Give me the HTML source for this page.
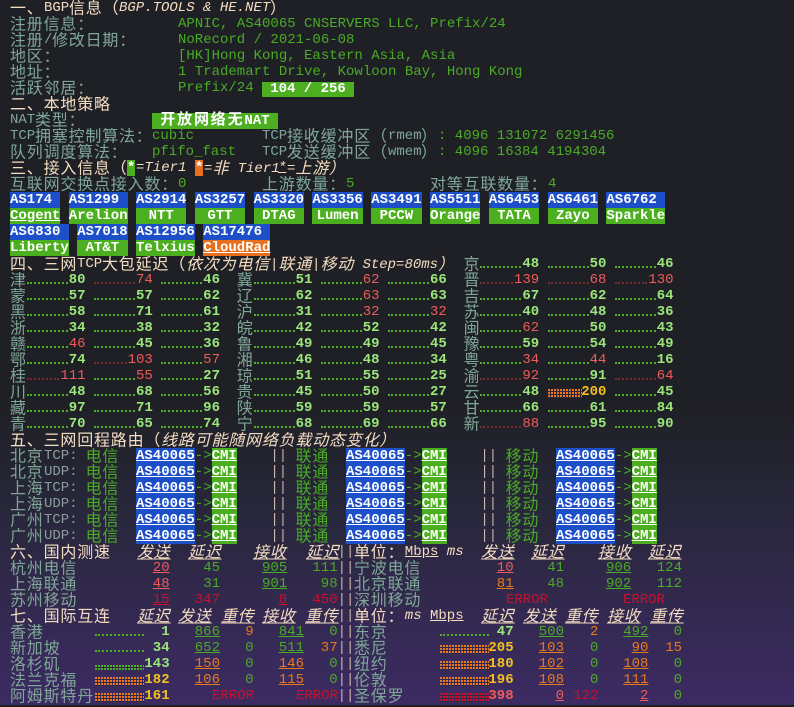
<!DOCTYPE html>
<html><head><meta charset="utf-8"><style>
body{margin:0;width:794px;height:705px;overflow:hidden;position:relative;background:linear-gradient(180deg,#1f2025 0,#1f2025 57%,#27273a 72%,#33294f 86%,#3c2b63 100%);font:14px/16px "Liberation Mono","Noto Sans CJK SC",monospace;color:#7fa797}
t{position:absolute;white-space:pre;display:block;height:16px}
.c{letter-spacing:0.8px;font-size:16px;transform:translateY(1.5px)}
span.c{display:inline-block}
.bx .c{font-size:15px;letter-spacing:1.8px;transform:none}
.h{color:#f3dcc0}.g{color:#7fa797}.v{color:#4aab25}.b{color:#9be77a;font-weight:bold}.r{color:#f05a5a}.dr{color:#c8102e}.o{color:#e8791e}.y{color:#f0c020;font-weight:bold}.gy{color:#8d9c9c}.p{color:#c9b3ab}
.it{font-style:italic}.u{text-decoration:underline}
.bx{color:#fff;font-weight:bold;text-align:center}
.bl{background:#1d4fc9}.gn{background:#4caf1f}.or{background:#e8701c}
.f{display:flex;width:58.8px;font-weight:bold}
.f i{flex:1;height:0;border-bottom:2px dotted #4caf20;margin:10px 1px 0 0}
.f.x i{border-bottom-color:#7a2a2a}
.f .n{color:#9be77a}.f .rr{color:#f05a5a;font-weight:normal}.f .yy{color:#f0c020}
.R{text-align:right}
.d{position:absolute;height:0;border-bottom:2px dotted #4caf20}
.gr{position:absolute;background:repeating-linear-gradient(90deg,var(--c) 0 2px,transparent 2px 3px)}
.gr::after{content:"";position:absolute;inset:0;background:repeating-linear-gradient(180deg,transparent 0 2px,#2f2944 2px 3px)}
</style></head><body>
<t class="h c" style="left:10px;top:0">一、</t><t class="h" style="left:44px;top:0">BGP</t><t class="h c" style="left:69px;top:0">信息（</t><t class="h it" style="left:119px;top:0">BGP.TOOLS &amp; HE.NET</t><t class="h c" style="left:270px;top:0">）</t>
<t class="g c" style="left:10px;top:16px">注册信息：</t><t class="v" style="left:178px;top:16px">APNIC, AS40065 CNSERVERS LLC, Prefix/24</t>
<t class="g c" style="left:10px;top:32px">注册</t><t class="g" style="left:44px;top:32px">/</t><t class="g c" style="left:52px;top:32px">修改日期：</t><t class="v" style="left:178px;top:32px">NoRecord / 2021-06-08</t>
<t class="g c" style="left:10px;top:48px">地区：</t><t class="v" style="left:178px;top:48px">[HK]Hong Kong, Eastern Asia, Asia</t>
<t class="g c" style="left:10px;top:64px">地址：</t><t class="v" style="left:178px;top:64px">1 Trademart Drive, Kowloon Bay, Hong Kong</t>
<t class="g c" style="left:10px;top:80px">活跃邻居：</t><t class="v" style="left:178px;top:80px">Prefix/24</t><t class="bx gn" style="left:262px;top:82px;width:92px;height:15px;line-height:15px">104 / 256</t>
<t class="h c" style="left:10px;top:96px">二、本地策略</t>
<t class="g" style="left:10px;top:112px">NAT</t><t class="g c" style="left:35px;top:112px">类型：</t><t class="bx gn" style="left:152px;top:113px;width:126px;height:16px"><span class="c">开放网络无</span>NAT</t>
<t class="g" style="left:10px;top:128px">TCP</t><t class="g c" style="left:35px;top:128px">拥塞控制算法：</t><t class="v" style="left:152px;top:128px">cubic</t><t class="g" style="left:262px;top:128px">TCP</t><t class="g c" style="left:287px;top:128px">接收缓冲区（</t><t class="g" style="left:388px;top:128px">rmem</t><t class="g c" style="left:421px;top:128px">）</t><t class="v" style="left:438px;top:128px">: 4096 131072 6291456</t>
<t class="g c" style="left:10px;top:144px">队列调度算法：</t><t class="v" style="left:152px;top:144px">pfifo_fast</t><t class="g" style="left:262px;top:144px">TCP</t><t class="g c" style="left:287px;top:144px">发送缓冲区（</t><t class="g" style="left:388px;top:144px">wmem</t><t class="g c" style="left:421px;top:144px">）</t><t class="v" style="left:438px;top:144px">: 4096 16384 4194304</t>
<t class="h c" style="left:10px;top:160px">三、接入信息（</t><t class="bx gn" style="left:127px;top:160px;width:8.4px">*</t><t class="h it" style="left:136px;top:160px">=Tier1</t><t class="bx or" style="left:195px;top:160px;width:8.4px">*</t><t class="h it" style="left:204px;top:160px">=<span class="c">非</span> Tier1</t><t class="h it u" style="left:278px;top:160px">*</t><t class="h it" style="left:287px;top:160px">=<span class="c">上游</span><span class="c">）</span></t>
<t class="g c" style="left:10px;top:176px">互联网交换点接入数：</t><t class="v" style="left:178px;top:176px">0</t><t class="g c" style="left:262px;top:176px">上游数量：</t><t class="v" style="left:346px;top:176px">5</t><t class="g c" style="left:430px;top:176px">对等互联数量：</t><t class="v" style="left:548px;top:176px">4</t>
<t class="bx bl" style="left:10px;top:192px;width:50.4px;text-align:left">AS174</t><t class="bx gn u" style="left:10px;top:208px;width:50.4px">Cogent</t>
<t class="bx bl" style="left:68.8px;top:192px;width:58.8px;text-align:left">AS1299</t><t class="bx gn" style="left:68.8px;top:208px;width:58.8px">Arelion</t>
<t class="bx bl" style="left:136px;top:192px;width:50.4px">AS2914</t><t class="bx gn" style="left:136px;top:208px;width:50.4px">NTT</t>
<t class="bx bl" style="left:194.8px;top:192px;width:50.4px">AS3257</t><t class="bx gn" style="left:194.8px;top:208px;width:50.4px">GTT</t>
<t class="bx bl" style="left:253.6px;top:192px;width:50.4px">AS3320</t><t class="bx gn" style="left:253.6px;top:208px;width:50.4px">DTAG</t>
<t class="bx bl" style="left:312.4px;top:192px;width:50.4px">AS3356</t><t class="bx gn" style="left:312.4px;top:208px;width:50.4px">Lumen</t>
<t class="bx bl" style="left:371.2px;top:192px;width:50.4px">AS3491</t><t class="bx gn" style="left:371.2px;top:208px;width:50.4px">PCCW</t>
<t class="bx bl" style="left:430px;top:192px;width:50.4px">AS5511</t><t class="bx gn" style="left:430px;top:208px;width:50.4px">Orange</t>
<t class="bx bl" style="left:488.8px;top:192px;width:50.4px">AS6453</t><t class="bx gn" style="left:488.8px;top:208px;width:50.4px">TATA</t>
<t class="bx bl" style="left:547.6px;top:192px;width:50.4px">AS6461</t><t class="bx gn" style="left:547.6px;top:208px;width:50.4px">Zayo</t>
<t class="bx bl" style="left:606.4px;top:192px;width:58.8px;text-align:left">AS6762</t><t class="bx gn" style="left:606.4px;top:208px;width:58.8px">Sparkle</t>
<t class="bx bl" style="left:10px;top:224px;width:58.8px;text-align:left">AS6830</t><t class="bx gn" style="left:10px;top:240px;width:58.8px">Liberty</t>
<t class="bx bl" style="left:77.2px;top:224px;width:50.4px">AS7018</t><t class="bx gn" style="left:77.2px;top:240px;width:50.4px">AT&amp;T</t>
<t class="bx bl" style="left:136px;top:224px;width:58.8px">AS12956</t><t class="bx gn" style="left:136px;top:240px;width:58.8px">Telxius</t>
<t class="bx bl" style="left:203.2px;top:224px;width:67.2px;text-align:left">AS17476</t><t class="bx or u" style="left:203.2px;top:240px;width:67.2px;text-align:left">CloudRad</t>
<t class="h c" style="left:10px;top:256px">四、三网</t><t class="h" style="left:77px;top:256px">TCP</t><t class="h c" style="left:102px;top:256px">大包延迟（</t><t class="h it" style="left:186px;top:256px"><span class="c">依次为电信</span>|<span class="c">联通</span>|<span class="c">移动</span> Step=80ms<span class="c">）</span></t>
<t class="g c" style="left:463.6px;top:256px">京</t><t class="f" style="left:480.4px;top:256px"><i></i><b class="n">48</b></t><t class="f" style="left:547.6px;top:256px"><i></i><b class="n">50</b></t><t class="f" style="left:614.8px;top:256px"><i></i><b class="n">46</b></t>

<t class="g c" style="left:10px;top:272px">津</t><t class="f" style="left:26.8px;top:272px"><i></i><b class="n">80</b></t><t class="f x" style="left:94px;top:272px"><i></i><b class="rr">74</b></t><t class="f" style="left:161.2px;top:272px"><i></i><b class="n">46</b></t>
<t class="g c" style="left:236.8px;top:272px">冀</t><t class="f" style="left:253.6px;top:272px"><i></i><b class="n">51</b></t><t class="f" style="left:320.8px;top:272px"><i></i><b class="rr">62</b></t><t class="f" style="left:388px;top:272px"><i></i><b class="n">66</b></t>
<t class="g c" style="left:463.6px;top:272px">晋</t><t class="f x" style="left:480.4px;top:272px"><i></i><b class="rr">139</b></t><t class="f x" style="left:547.6px;top:272px"><i></i><b class="rr">68</b></t><t class="f x" style="left:614.8px;top:272px"><i></i><b class="rr">130</b></t>

<t class="g c" style="left:10px;top:288px">蒙</t><t class="f" style="left:26.8px;top:288px"><i></i><b class="n">57</b></t><t class="f" style="left:94px;top:288px"><i></i><b class="n">57</b></t><t class="f" style="left:161.2px;top:288px"><i></i><b class="n">62</b></t>
<t class="g c" style="left:236.8px;top:288px">辽</t><t class="f" style="left:253.6px;top:288px"><i></i><b class="n">62</b></t><t class="f" style="left:320.8px;top:288px"><i></i><b class="rr">63</b></t><t class="f" style="left:388px;top:288px"><i></i><b class="n">63</b></t>
<t class="g c" style="left:463.6px;top:288px">吉</t><t class="f" style="left:480.4px;top:288px"><i></i><b class="n">67</b></t><t class="f" style="left:547.6px;top:288px"><i></i><b class="n">62</b></t><t class="f" style="left:614.8px;top:288px"><i></i><b class="n">64</b></t>

<t class="g c" style="left:10px;top:304px">黑</t><t class="f" style="left:26.8px;top:304px"><i></i><b class="n">58</b></t><t class="f" style="left:94px;top:304px"><i></i><b class="n">71</b></t><t class="f" style="left:161.2px;top:304px"><i></i><b class="n">61</b></t>
<t class="g c" style="left:236.8px;top:304px">沪</t><t class="f" style="left:253.6px;top:304px"><i></i><b class="n">31</b></t><t class="f" style="left:320.8px;top:304px"><i></i><b class="rr">32</b></t><t class="f" style="left:388px;top:304px"><i></i><b class="rr">32</b></t>
<t class="g c" style="left:463.6px;top:304px">苏</t><t class="f" style="left:480.4px;top:304px"><i></i><b class="n">40</b></t><t class="f" style="left:547.6px;top:304px"><i></i><b class="n">48</b></t><t class="f" style="left:614.8px;top:304px"><i></i><b class="n">36</b></t>

<t class="g c" style="left:10px;top:320px">浙</t><t class="f" style="left:26.8px;top:320px"><i></i><b class="n">34</b></t><t class="f" style="left:94px;top:320px"><i></i><b class="n">38</b></t><t class="f" style="left:161.2px;top:320px"><i></i><b class="n">32</b></t>
<t class="g c" style="left:236.8px;top:320px">皖</t><t class="f" style="left:253.6px;top:320px"><i></i><b class="n">42</b></t><t class="f" style="left:320.8px;top:320px"><i></i><b class="n">52</b></t><t class="f" style="left:388px;top:320px"><i></i><b class="n">42</b></t>
<t class="g c" style="left:463.6px;top:320px">闽</t><t class="f" style="left:480.4px;top:320px"><i></i><b class="rr">62</b></t><t class="f" style="left:547.6px;top:320px"><i></i><b class="n">50</b></t><t class="f" style="left:614.8px;top:320px"><i></i><b class="n">43</b></t>

<t class="g c" style="left:10px;top:336px">赣</t><t class="f" style="left:26.8px;top:336px"><i></i><b class="rr">46</b></t><t class="f" style="left:94px;top:336px"><i></i><b class="n">45</b></t><t class="f" style="left:161.2px;top:336px"><i></i><b class="n">36</b></t>
<t class="g c" style="left:236.8px;top:336px">鲁</t><t class="f" style="left:253.6px;top:336px"><i></i><b class="n">49</b></t><t class="f" style="left:320.8px;top:336px"><i></i><b class="n">49</b></t><t class="f" style="left:388px;top:336px"><i></i><b class="n">45</b></t>
<t class="g c" style="left:463.6px;top:336px">豫</t><t class="f" style="left:480.4px;top:336px"><i></i><b class="n">59</b></t><t class="f" style="left:547.6px;top:336px"><i></i><b class="n">54</b></t><t class="f" style="left:614.8px;top:336px"><i></i><b class="n">49</b></t>

<t class="g c" style="left:10px;top:352px">鄂</t><t class="f" style="left:26.8px;top:352px"><i></i><b class="n">74</b></t><t class="f x" style="left:94px;top:352px"><i></i><b class="rr">103</b></t><t class="f" style="left:161.2px;top:352px"><i></i><b class="rr">57</b></t>
<t class="g c" style="left:236.8px;top:352px">湘</t><t class="f" style="left:253.6px;top:352px"><i></i><b class="n">46</b></t><t class="f" style="left:320.8px;top:352px"><i></i><b class="n">48</b></t><t class="f" style="left:388px;top:352px"><i></i><b class="n">34</b></t>
<t class="g c" style="left:463.6px;top:352px">粤</t><t class="f" style="left:480.4px;top:352px"><i></i><b class="rr">34</b></t><t class="f" style="left:547.6px;top:352px"><i></i><b class="rr">44</b></t><t class="f" style="left:614.8px;top:352px"><i></i><b class="n">16</b></t>

<t class="g c" style="left:10px;top:368px">桂</t><t class="f x" style="left:26.8px;top:368px"><i></i><b class="rr">111</b></t><t class="f" style="left:94px;top:368px"><i></i><b class="rr">55</b></t><t class="f" style="left:161.2px;top:368px"><i></i><b class="n">27</b></t>
<t class="g c" style="left:236.8px;top:368px">琼</t><t class="f" style="left:253.6px;top:368px"><i></i><b class="n">51</b></t><t class="f" style="left:320.8px;top:368px"><i></i><b class="n">55</b></t><t class="f" style="left:388px;top:368px"><i></i><b class="n">25</b></t>
<t class="g c" style="left:463.6px;top:368px">渝</t><t class="f x" style="left:480.4px;top:368px"><i></i><b class="rr">92</b></t><t class="f" style="left:547.6px;top:368px"><i></i><b class="n">91</b></t><t class="f x" style="left:614.8px;top:368px"><i></i><b class="rr">64</b></t>

<t class="g c" style="left:10px;top:384px">川</t><t class="f" style="left:26.8px;top:384px"><i></i><b class="n">48</b></t><t class="f" style="left:94px;top:384px"><i></i><b class="n">68</b></t><t class="f" style="left:161.2px;top:384px"><i></i><b class="n">56</b></t>
<t class="g c" style="left:236.8px;top:384px">贵</t><t class="f" style="left:253.6px;top:384px"><i></i><b class="n">45</b></t><t class="f" style="left:320.8px;top:384px"><i></i><b class="n">50</b></t><t class="f" style="left:388px;top:384px"><i></i><b class="n">27</b></t>
<t class="g c" style="left:463.6px;top:384px">云</t><t class="f" style="left:480.4px;top:384px"><i></i><b class="n">48</b></t><div class="gr" style="left:547.6px;top:389px;width:34px;height:9px;--c:#e8791e"></div><t class="y R" style="right:187.6px;top:384px">200</t><t class="f" style="left:614.8px;top:384px"><i></i><b class="n">45</b></t>

<t class="g c" style="left:10px;top:400px">藏</t><t class="f" style="left:26.8px;top:400px"><i></i><b class="n">97</b></t><t class="f" style="left:94px;top:400px"><i></i><b class="n">71</b></t><t class="f" style="left:161.2px;top:400px"><i></i><b class="n">96</b></t>
<t class="g c" style="left:236.8px;top:400px">陕</t><t class="f" style="left:253.6px;top:400px"><i></i><b class="n">59</b></t><t class="f" style="left:320.8px;top:400px"><i></i><b class="n">59</b></t><t class="f" style="left:388px;top:400px"><i></i><b class="n">57</b></t>
<t class="g c" style="left:463.6px;top:400px">甘</t><t class="f" style="left:480.4px;top:400px"><i></i><b class="n">66</b></t><t class="f" style="left:547.6px;top:400px"><i></i><b class="n">61</b></t><t class="f" style="left:614.8px;top:400px"><i></i><b class="n">84</b></t>

<t class="g c" style="left:10px;top:416px">青</t><t class="f" style="left:26.8px;top:416px"><i></i><b class="n">70</b></t><t class="f" style="left:94px;top:416px"><i></i><b class="n">65</b></t><t class="f" style="left:161.2px;top:416px"><i></i><b class="n">74</b></t>
<t class="g c" style="left:236.8px;top:416px">宁</t><t class="f" style="left:253.6px;top:416px"><i></i><b class="n">68</b></t><t class="f" style="left:320.8px;top:416px"><i></i><b class="n">69</b></t><t class="f" style="left:388px;top:416px"><i></i><b class="n">66</b></t>
<t class="g c" style="left:463.6px;top:416px">新</t><t class="f x" style="left:480.4px;top:416px"><i></i><b class="rr">88</b></t><t class="f" style="left:547.6px;top:416px"><i></i><b class="n">95</b></t><t class="f" style="left:614.8px;top:416px"><i></i><b class="n">90</b></t>

<t class="h c" style="left:10px;top:432px">五、三网回程路由（</t><t class="h it c" style="left:161px;top:432px">线路可能随网络负载动态变化）</t>

<t class="g c" style="left:10px;top:448px">北京</t><t class="gy" style="left:44px;top:448px">TCP:</t><t class="v c" style="left:85.6px;top:448px">电信</t>
<t class="g c" style="left:10px;top:464px">北京</t><t class="gy" style="left:44px;top:464px">UDP:</t><t class="v c" style="left:85.6px;top:464px">电信</t>
<t class="g c" style="left:10px;top:480px">上海</t><t class="gy" style="left:44px;top:480px">TCP:</t><t class="v c" style="left:85.6px;top:480px">电信</t>
<t class="g c" style="left:10px;top:496px">上海</t><t class="gy" style="left:44px;top:496px">UDP:</t><t class="v c" style="left:85.6px;top:496px">电信</t>
<t class="g c" style="left:10px;top:512px">广州</t><t class="gy" style="left:44px;top:512px">TCP:</t><t class="v c" style="left:85.6px;top:512px">电信</t>
<t class="g c" style="left:10px;top:528px">广州</t><t class="gy" style="left:44px;top:528px">UDP:</t><t class="v c" style="left:85.6px;top:528px">电信</t>

<t class="bx bl u" style="left:136px;top:448px;width:58.8px">AS40065</t><t class="v" style="left:194.8px;top:448px">-&gt;</t><t class="bx gn u" style="left:211.6px;top:448px;width:25.2px">CMI</t><t class="p" style="left:270.4px;top:448px">||</t><t class="v c" style="left:295.6px;top:448px">联通</t><t class="bx bl u" style="left:346px;top:448px;width:58.8px">AS40065</t><t class="v" style="left:404.8px;top:448px">-&gt;</t><t class="bx gn u" style="left:421.6px;top:448px;width:25.2px">CMI</t><t class="p" style="left:480.4px;top:448px">||</t><t class="v c" style="left:505.6px;top:448px">移动</t><t class="bx bl u" style="left:556px;top:448px;width:58.8px">AS40065</t><t class="v" style="left:614.8px;top:448px">-&gt;</t><t class="bx gn u" style="left:631.6px;top:448px;width:25.2px">CMI</t>
<t class="bx bl u" style="left:136px;top:464px;width:58.8px">AS40065</t><t class="v" style="left:194.8px;top:464px">-&gt;</t><t class="bx gn u" style="left:211.6px;top:464px;width:25.2px">CMI</t><t class="p" style="left:270.4px;top:464px">||</t><t class="v c" style="left:295.6px;top:464px">联通</t><t class="bx bl u" style="left:346px;top:464px;width:58.8px">AS40065</t><t class="v" style="left:404.8px;top:464px">-&gt;</t><t class="bx gn u" style="left:421.6px;top:464px;width:25.2px">CMI</t><t class="p" style="left:480.4px;top:464px">||</t><t class="v c" style="left:505.6px;top:464px">移动</t><t class="bx bl u" style="left:556px;top:464px;width:58.8px">AS40065</t><t class="v" style="left:614.8px;top:464px">-&gt;</t><t class="bx gn u" style="left:631.6px;top:464px;width:25.2px">CMI</t>
<t class="bx bl u" style="left:136px;top:480px;width:58.8px">AS40065</t><t class="v" style="left:194.8px;top:480px">-&gt;</t><t class="bx gn u" style="left:211.6px;top:480px;width:25.2px">CMI</t><t class="p" style="left:270.4px;top:480px">||</t><t class="v c" style="left:295.6px;top:480px">联通</t><t class="bx bl u" style="left:346px;top:480px;width:58.8px">AS40065</t><t class="v" style="left:404.8px;top:480px">-&gt;</t><t class="bx gn u" style="left:421.6px;top:480px;width:25.2px">CMI</t><t class="p" style="left:480.4px;top:480px">||</t><t class="v c" style="left:505.6px;top:480px">移动</t><t class="bx bl u" style="left:556px;top:480px;width:58.8px">AS40065</t><t class="v" style="left:614.8px;top:480px">-&gt;</t><t class="bx gn u" style="left:631.6px;top:480px;width:25.2px">CMI</t>
<t class="bx bl u" style="left:136px;top:496px;width:58.8px">AS40065</t><t class="v" style="left:194.8px;top:496px">-&gt;</t><t class="bx gn u" style="left:211.6px;top:496px;width:25.2px">CMI</t><t class="p" style="left:270.4px;top:496px">||</t><t class="v c" style="left:295.6px;top:496px">联通</t><t class="bx bl u" style="left:346px;top:496px;width:58.8px">AS40065</t><t class="v" style="left:404.8px;top:496px">-&gt;</t><t class="bx gn u" style="left:421.6px;top:496px;width:25.2px">CMI</t><t class="p" style="left:480.4px;top:496px">||</t><t class="v c" style="left:505.6px;top:496px">移动</t><t class="bx bl u" style="left:556px;top:496px;width:58.8px">AS40065</t><t class="v" style="left:614.8px;top:496px">-&gt;</t><t class="bx gn u" style="left:631.6px;top:496px;width:25.2px">CMI</t>
<t class="bx bl u" style="left:136px;top:512px;width:58.8px">AS40065</t><t class="v" style="left:194.8px;top:512px">-&gt;</t><t class="bx gn u" style="left:211.6px;top:512px;width:25.2px">CMI</t><t class="p" style="left:270.4px;top:512px">||</t><t class="v c" style="left:295.6px;top:512px">联通</t><t class="bx bl u" style="left:346px;top:512px;width:58.8px">AS40065</t><t class="v" style="left:404.8px;top:512px">-&gt;</t><t class="bx gn u" style="left:421.6px;top:512px;width:25.2px">CMI</t><t class="p" style="left:480.4px;top:512px">||</t><t class="v c" style="left:505.6px;top:512px">移动</t><t class="bx bl u" style="left:556px;top:512px;width:58.8px">AS40065</t><t class="v" style="left:614.8px;top:512px">-&gt;</t><t class="bx gn u" style="left:631.6px;top:512px;width:25.2px">CMI</t>
<t class="bx bl u" style="left:136px;top:528px;width:58.8px">AS40065</t><t class="v" style="left:194.8px;top:528px">-&gt;</t><t class="bx gn u" style="left:211.6px;top:528px;width:25.2px">CMI</t><t class="p" style="left:270.4px;top:528px">||</t><t class="v c" style="left:295.6px;top:528px">联通</t><t class="bx bl u" style="left:346px;top:528px;width:58.8px">AS40065</t><t class="v" style="left:404.8px;top:528px">-&gt;</t><t class="bx gn u" style="left:421.6px;top:528px;width:25.2px">CMI</t><t class="p" style="left:480.4px;top:528px">||</t><t class="v c" style="left:505.6px;top:528px">移动</t><t class="bx bl u" style="left:556px;top:528px;width:58.8px">AS40065</t><t class="v" style="left:614.8px;top:528px">-&gt;</t><t class="bx gn u" style="left:631.6px;top:528px;width:25.2px">CMI</t>

<t class="h c" style="left:10px;top:544px">六、国内测速</t>
<t class="h it u c" style="left:137px;top:544px">发送</t><t class="h it u c" style="left:188px;top:544px">延迟</t><t class="h it u c" style="left:253px;top:544px">接收</t><t class="h it u c" style="left:306px;top:544px">延迟</t><t class="p" style="left:337.6px;top:544px">||</t><t class="h c" style="left:354px;top:544px">单位：</t><t class="h u" style="left:404.8px;top:544px">Mbps</t><t class="h it" style="left:446.8px;top:544px">ms</t>
<t class="h it u c" style="left:481px;top:544px">发送</t><t class="h it u c" style="left:531px;top:544px">延迟</t><t class="h it u c" style="left:598px;top:544px">接收</t><t class="h it u c" style="left:648px;top:544px">延迟</t>

<t class="g c" style="left:10px;top:560px">杭州电信</t><t class="r u R" style="right:624.4px;top:560px">20</t><t class="v R" style="right:574px;top:560px">45</t><t class="v u R" style="right:506.8px;top:560px">905</t><t class="v R" style="right:456.4px;top:560px">111</t><t class="p" style="left:337.6px;top:560px">||</t>
<t class="g c" style="left:354px;top:560px">宁波电信</t><t class="r u R" style="right:280.4px;top:560px">10</t><t class="v R" style="right:230px;top:560px">41</t><t class="v u R" style="right:162.8px;top:560px">906</t><t class="v R" style="right:112px;top:560px">124</t>
<t class="g c" style="left:10px;top:576px">上海联通</t><t class="r u R" style="right:624.4px;top:576px">48</t><t class="v R" style="right:574px;top:576px">31</t><t class="v u R" style="right:506.8px;top:576px">901</t><t class="v R" style="right:456.4px;top:576px">98</t><t class="p" style="left:337.6px;top:576px">||</t>
<t class="g c" style="left:354px;top:576px">北京联通</t><t class="o u R" style="right:280.4px;top:576px">81</t><t class="v R" style="right:230px;top:576px">48</t><t class="v u R" style="right:162.8px;top:576px">902</t><t class="v R" style="right:112px;top:576px">112</t>
<t class="g c" style="left:10px;top:592px">苏州移动</t><t class="dr u R" style="right:624.4px;top:592px">15</t><t class="dr R" style="right:574px;top:592px">347</t><t class="dr u R" style="right:506.8px;top:592px">0</t><t class="dr R" style="right:456.4px;top:592px">450</t><t class="p" style="left:337.6px;top:592px">||</t>
<t class="g c" style="left:354px;top:592px">深圳移动</t><t class="dr" style="left:506px;top:592px">ERROR</t><t class="dr" style="left:623px;top:592px">ERROR</t>

<t class="h c" style="left:10px;top:608px">七、国际互连</t>
<t class="h it u c" style="left:137px;top:608px">延迟</t><t class="h it u c" style="left:178px;top:608px">发送</t><t class="h it u c" style="left:221px;top:608px">重传</t><t class="h it u c" style="left:262px;top:608px">接收</t><t class="h it u c" style="left:305px;top:608px">重传</t><t class="p" style="left:337.6px;top:608px">||</t><t class="h c" style="left:354px;top:608px">单位：</t><t class="h it" style="left:404.8px;top:608px">ms</t><t class="h u" style="left:430px;top:608px">Mbps</t>
<t class="h it u c" style="left:481px;top:608px">延迟</t><t class="h it u c" style="left:523px;top:608px">发送</t><t class="h it u c" style="left:565px;top:608px">重传</t><t class="h it u c" style="left:607px;top:608px">接收</t><t class="h it u c" style="left:650px;top:608px">重传</t>

<t class="g c" style="left:10px;top:624px">香港</t><div class="d" style="left:95px;top:634px;width:49px"></div><t class="b R" style="right:624.4px;top:624px">1</t><t class="v u R" style="right:574px;top:624px">866</t><t class="o R" style="right:540.4px;top:624px">9</t><t class="v u R" style="right:490px;top:624px">841</t><t class="v R" style="right:456.4px;top:624px">0</t><t class="p" style="left:337.6px;top:624px">||</t>
<t class="g c" style="left:354px;top:624px">东京</t><div class="d" style="left:440px;top:634px;width:49px"></div><t class="b R" style="right:280.4px;top:624px">47</t><t class="v u R" style="right:230px;top:624px">500</t><t class="o R" style="right:195.6px;top:624px">2</t><t class="v u R" style="right:145.6px;top:624px">492</t><t class="v R" style="right:112px;top:624px">0</t>

<t class="g c" style="left:10px;top:640px">新加坡</t><div class="d" style="left:95px;top:650px;width:49px"></div><t class="b R" style="right:624.4px;top:640px">34</t><t class="v u R" style="right:574px;top:640px">652</t><t class="v R" style="right:540.4px;top:640px">0</t><t class="v u R" style="right:490px;top:640px">511</t><t class="o R" style="right:456.4px;top:640px">37</t><t class="p" style="left:337.6px;top:640px">||</t>
<t class="g c" style="left:354px;top:640px">悉尼</t><div class="gr" style="left:440px;top:645px;width:49px;height:9px;--c:#e8791e"></div><t class="y R" style="right:280.4px;top:640px">205</t><t class="o u R" style="right:230px;top:640px">103</t><t class="v R" style="right:195.6px;top:640px">0</t><t class="o u R" style="right:145.6px;top:640px">90</t><t class="o R" style="right:112px;top:640px">15</t>

<t class="g c" style="left:10px;top:656px">洛杉矶</t><div class="gr" style="left:95px;top:665px;width:49px;height:5px;--c:#4caf20"></div><t class="b R" style="right:624.4px;top:656px">143</t><t class="o u R" style="right:574px;top:656px">150</t><t class="v R" style="right:540.4px;top:656px">0</t><t class="o u R" style="right:490px;top:656px">146</t><t class="v R" style="right:456.4px;top:656px">0</t><t class="p" style="left:337.6px;top:656px">||</t>
<t class="g c" style="left:354px;top:656px">纽约</t><div class="gr" style="left:440px;top:661px;width:49px;height:9px;--c:#e8791e"></div><t class="y R" style="right:280.4px;top:656px">180</t><t class="o u R" style="right:230px;top:656px">102</t><t class="v R" style="right:195.6px;top:656px">0</t><t class="o u R" style="right:145.6px;top:656px">108</t><t class="v R" style="right:112px;top:656px">0</t>

<t class="g c" style="left:10px;top:672px">法兰克福</t><div class="gr" style="left:95px;top:677px;width:49px;height:9px;--c:#e8791e"></div><t class="y R" style="right:624.4px;top:672px">182</t><t class="o u R" style="right:574px;top:672px">106</t><t class="v R" style="right:540.4px;top:672px">0</t><t class="o u R" style="right:490px;top:672px">115</t><t class="v R" style="right:456.4px;top:672px">0</t><t class="p" style="left:337.6px;top:672px">||</t>
<t class="g c" style="left:354px;top:672px">伦敦</t><div class="gr" style="left:440px;top:677px;width:49px;height:9px;--c:#e8791e"></div><t class="y R" style="right:280.4px;top:672px">196</t><t class="o u R" style="right:230px;top:672px">108</t><t class="v R" style="right:195.6px;top:672px">0</t><t class="o u R" style="right:145.6px;top:672px">111</t><t class="v R" style="right:112px;top:672px">0</t>

<t class="g c" style="left:10px;top:688px">阿姆斯特丹</t><div class="gr" style="left:95px;top:693px;width:49px;height:9px;--c:#e8791e"></div><t class="y R" style="right:624.4px;top:688px">161</t><t class="dr" style="left:212px;top:688px">ERROR</t><t class="dr" style="left:296px;top:688px">ERROR</t><t class="p" style="left:337.6px;top:688px">||</t>
<t class="g c" style="left:354px;top:688px">圣保罗</t><div class="gr" style="left:440px;top:693px;width:49px;height:9px;--c:#c8102e"></div><t class="r R" style="right:280.4px;top:688px;font-weight:bold">398</t><t class="r u R" style="right:230px;top:688px">0</t><t class="dr R" style="right:195.6px;top:688px">122</t><t class="r u R" style="right:145.6px;top:688px">2</t><t class="v R" style="right:112px;top:688px">0</t>
</body></html>
